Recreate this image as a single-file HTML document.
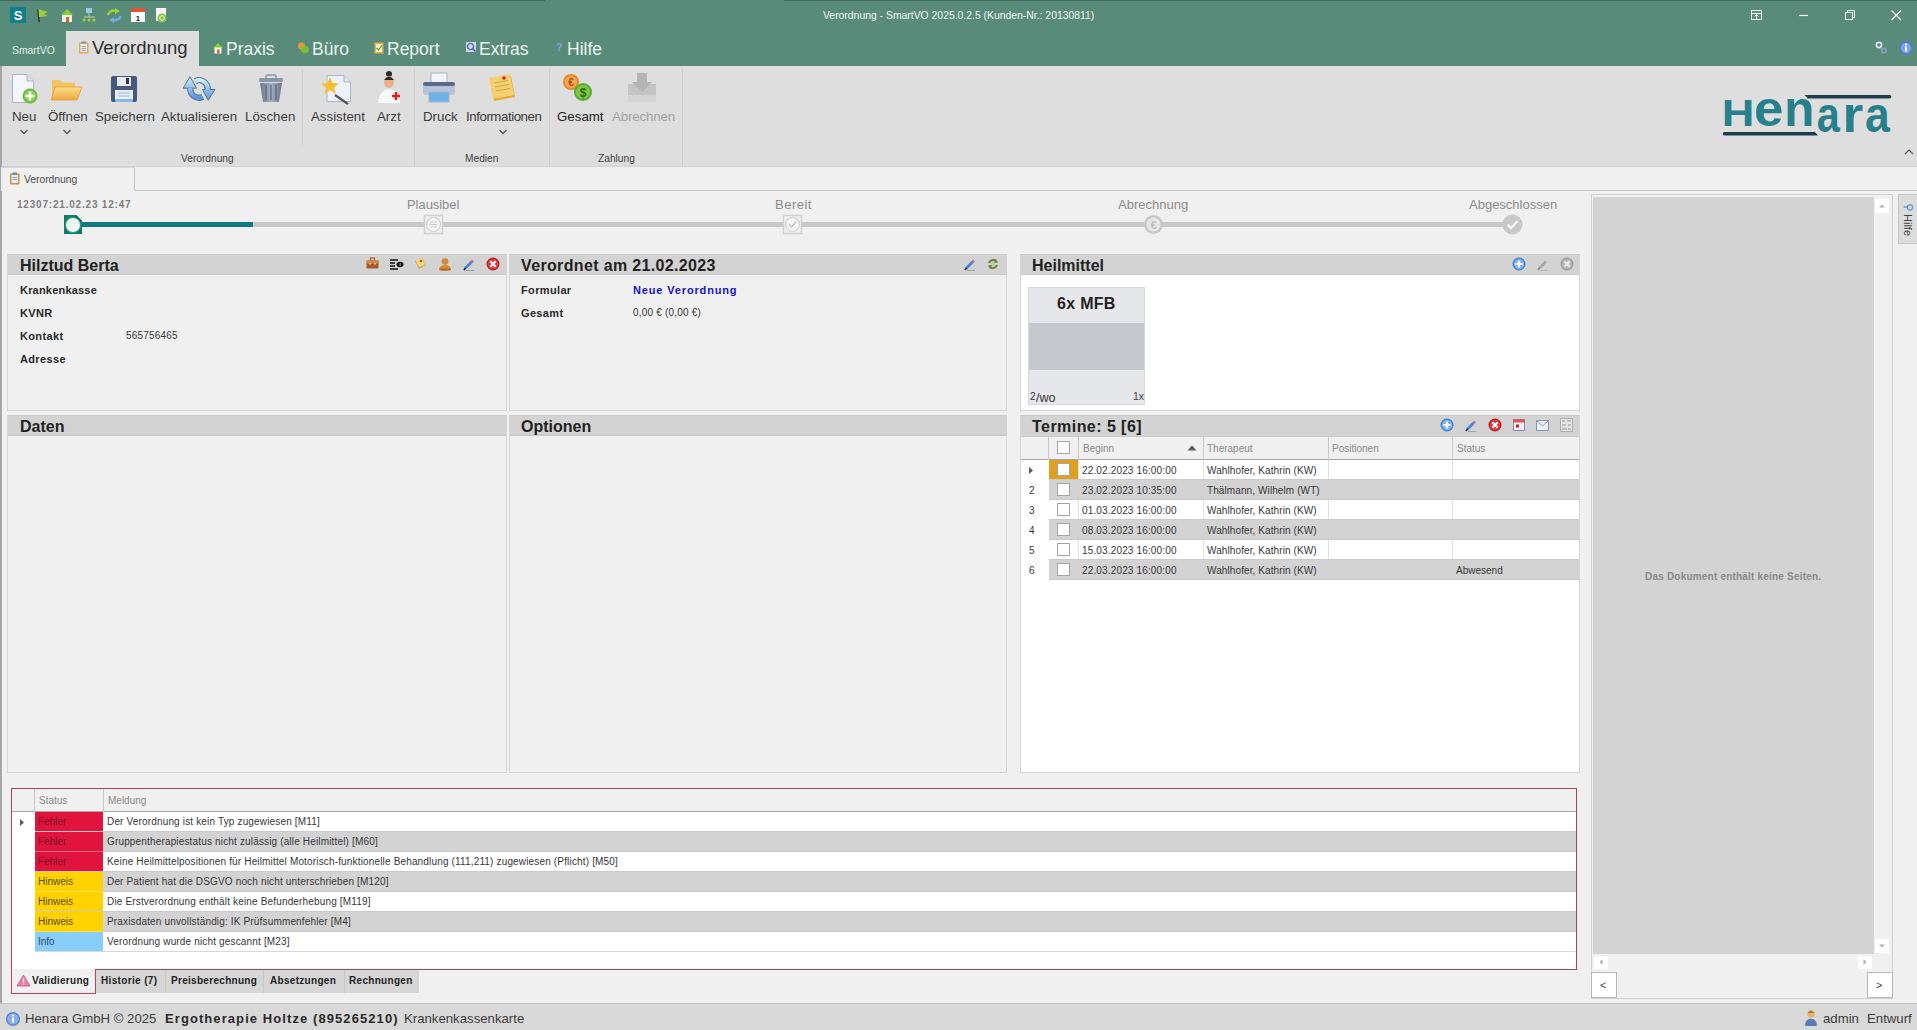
<!DOCTYPE html>
<html><head><meta charset="utf-8">
<style>
*{box-sizing:border-box;margin:0;padding:0}
html,body{width:1917px;height:1030px;overflow:hidden;background:#f0f0f0;font-family:"Liberation Sans",sans-serif;color:#333}
.a{position:absolute}
.t{position:absolute;white-space:nowrap;line-height:1}
#top{left:0;top:0;width:1917px;height:66px;background:#598b7a}
#topline{left:0;top:0;width:1917px;height:1px;background:#3f6d5d}
.mt{color:#e8f5f0;font-size:17.5px;top:41px}
#ribbon{left:0;top:66px;width:1917px;height:101px;background:#dedede;border-bottom:1px solid #d2d2d2}
.rb{font-size:13.3px;color:#3a3a3a}
.gl{font-size:10.2px;color:#444;top:154px}
.sep{width:1px;background:#cfcfcf}
.chev{font-size:9px;color:#555}
.ph{background:#d3d3d3;height:21px;box-shadow:inset 0 1px #cbcbcb,inset 0 -1px #cbcbcb}
.pb{background:#f0f0f0;border:1px solid #d6d6d6}
.ht{font-size:16px;font-weight:700;color:#222}
.lb{font-size:11px;font-weight:700;color:#2a2a2a;letter-spacing:.35px}
.gh{font-size:10px;color:#8a8a8a}
.cell{font-size:10px;color:#363636}
</style></head>
<body>

<svg width="0" height="0" style="position:absolute">
 <defs>
  <symbol id="i-plus" viewBox="0 0 14 14"><circle cx="7" cy="7" r="6.5" fill="#3f7fd0"/><circle cx="7" cy="7" r="5.2" fill="#7db2ee"/><path d="M7 3.5 V10.5 M3.5 7 H10.5" stroke="#fff" stroke-width="2.2"/></symbol>
  <symbol id="i-x" viewBox="0 0 14 14"><circle cx="7" cy="7" r="6.5" fill="#b81c1c"/><circle cx="7" cy="7" r="5.3" fill="#e03a3a"/><path d="M4.3 4.3 L9.7 9.7 M9.7 4.3 L4.3 9.7" stroke="#fff" stroke-width="2"/></symbol>
  <symbol id="i-xg" viewBox="0 0 14 14"><circle cx="7" cy="7" r="6.5" fill="#9a9a9a"/><circle cx="7" cy="7" r="5.3" fill="#b4b4b4"/><path d="M4.3 4.3 L9.7 9.7 M9.7 4.3 L4.3 9.7" stroke="#eee" stroke-width="2"/></symbol>
  <symbol id="i-pen" viewBox="0 0 12 12"><path d="M2 9.5 L9 2.5" stroke="#4a82d8" stroke-width="2.6"/><path d="M8.3 3.2 L10 1.5" stroke="#d86a80" stroke-width="2.6"/><path d="M1 11 L2.5 9" stroke="#222" stroke-width="1.5"/><path d="M3 11.5 H11" stroke="#9aa4b0" stroke-width="1"/></symbol>
  <symbol id="i-peng" viewBox="0 0 12 12"><path d="M2 9.5 L9 2.5" stroke="#a8a8a8" stroke-width="2.6"/><path d="M1 11 L2.5 9" stroke="#888" stroke-width="1.5"/><path d="M3 11.5 H11" stroke="#b8b8b8" stroke-width="1"/></symbol>
 </defs>
</svg>
<!-- title + menu -->
<div class="a" id="top"></div>
<div class="a" id="topline" style="width:545px"></div><div class="a" style="left:784px;top:0;width:1133px;height:1px;background:#3f6d5d"></div>


<!-- quick access icons -->
<svg class="a" style="left:9px;top:7px" width="170" height="18" viewBox="0 0 170 18">
 <rect x="1" y="0" width="16" height="16" fill="#127f8c"/>
 <text x="9" y="13" font-family="Liberation Sans" font-weight="700" font-size="13" fill="#fff" text-anchor="middle">S</text>
 <path d="M29 2 L30 15" stroke="#2b3a2e" stroke-width="1.6"/>
 <path d="M29.5 2 L39 5 L35 7 L39 9 L30 10 Z" fill="#9ccf3a"/>
 <path d="M52 8 L58 2 L64 8 Z" fill="#8acb3a"/><rect x="53" y="8" width="10" height="7" fill="#f4f0e8"/><rect x="57" y="10" width="3" height="5" fill="#d06a2a"/>
 <rect x="77" y="1" width="6" height="5" fill="#9cc7ea"/><path d="M80 6 V10 M75 10 H86" stroke="#c8d08a" stroke-width="1"/><circle cx="75" cy="13" r="1.6" fill="#9ccf3a"/><circle cx="80" cy="13" r="1.6" fill="#9ccf3a"/><circle cx="85" cy="13" r="1.6" fill="#9ccf3a"/>
 <path d="M99 8 Q101 2 108 4" stroke="#9ccf3a" stroke-width="2.4" fill="none"/><path d="M106 1 L111 4 L106 7Z" fill="#9ccf3a"/>
 <path d="M112 9 Q110 14 103 13" stroke="#6eaee0" stroke-width="2.4" fill="none"/><path d="M105 10 L100 13 L105 16Z" fill="#6eaee0"/>
 <rect x="122" y="1" width="14" height="14" fill="#fafafa"/><rect x="122" y="1" width="14" height="4" fill="#e0553a"/><text x="129" y="14" font-family="Liberation Sans" font-weight="700" font-size="8" fill="#223" text-anchor="middle">1</text>
 <rect x="147" y="1" width="10" height="13" fill="#f4f4f4"/><circle cx="153" cy="11" r="4.5" fill="#8cc63c"/><circle cx="153" cy="11" r="2.3" fill="none" stroke="#e8f5d8" stroke-width="1"/>
</svg>
<div class="t" style="left:823px;top:11px;font-size:10.4px;color:#eef6f2">Verordnung - SmartVO 2025.0.2.5 (Kunden-Nr.: 20130811)</div>
<!-- window buttons -->
<svg class="a" style="left:1745px;top:4px" width="170" height="22" viewBox="0 0 170 22">
 <rect x="6.5" y="6.5" width="10" height="9" fill="none" stroke="#f0f0f0" stroke-width="1"/><path d="M6.5 9.5 H16.5 M11.5 15 V11 M9.5 12.5 L11.5 10.5 L13.5 12.5" stroke="#f0f0f0" stroke-width="1" fill="none"/>
 <path d="M54 11.5 H63" stroke="#f0f0f0" stroke-width="1.2"/>
 <rect x="100.5" y="8.5" width="7" height="7" fill="none" stroke="#f0f0f0"/><path d="M102.5 8.5 V6.5 H109.5 V13.5 H107.5" fill="none" stroke="#f0f0f0"/>
 <path d="M146.5 6.5 L156 16 M156 6.5 L146.5 16" stroke="#f0f0f0" stroke-width="1.3"/>
</svg>
<!-- menu tabs -->
<div class="t" style="left:12px;top:46px;font-size:10.4px;color:#e3f1ec">SmartVO</div>
<div class="a" style="left:66px;top:31px;width:133px;height:36px;background:#dedede"></div>
<svg class="a" style="left:78px;top:41px" width="12" height="13" viewBox="0 0 12 13"><rect x="1" y="1.5" width="9.5" height="11" rx="1" fill="#e7a64a"/><rect x="2.5" y="3" width="6.5" height="8" fill="#eef2f8"/><rect x="3.5" y="0.5" width="4.5" height="2" fill="#7d8fa8"/><path d="M3.5 5.5 H8 M3.5 7.5 H8 M3.5 9.5 H8" stroke="#7a8aa8" stroke-width=".8"/></svg>
<div class="t" style="left:92px;top:39px;font-size:18.5px;color:#2d2d2d">Verordnung</div>
<svg class="a" style="left:212px;top:41px" width="12" height="13" viewBox="0 0 12 13"><path d="M1 7 L6 2 L11 7Z" fill="#8acb3a"/><rect x="2.5" y="6.5" width="7" height="6" fill="#f8f4ea"/><rect x="5" y="8.5" width="2.5" height="4" fill="#d06a2a"/></svg>
<div class="t mt" style="left:226px">Praxis</div>
<svg class="a" style="left:297px;top:41px" width="13" height="13" viewBox="0 0 13 13"><circle cx="4.5" cy="5" r="3.5" fill="#e89a3a"/><circle cx="8" cy="8.5" r="3.8" fill="#7cbd3a"/></svg>
<div class="t mt" style="left:312px">Büro</div>
<svg class="a" style="left:373px;top:41px" width="12" height="13" viewBox="0 0 12 13"><rect x="1.5" y="1.5" width="9" height="11" fill="#e8b040"/><rect x="3" y="3" width="6" height="8" fill="#f7f1dc"/><path d="M3.5 7 L5.5 9 L9 4" stroke="#6aa83a" stroke-width="1.3" fill="none"/></svg>
<div class="t mt" style="left:387px">Report</div>
<svg class="a" style="left:465px;top:41px" width="12" height="12" viewBox="0 0 12 12"><rect x="1" y="1" width="10" height="10" fill="#c9d6ec"/><circle cx="5.5" cy="5.5" r="3" fill="none" stroke="#4a5f9a" stroke-width="1.2"/><path d="M7.5 7.5 L10.5 10.5" stroke="#4a5f9a" stroke-width="1.4"/></svg>
<div class="t mt" style="left:479px">Extras</div>
<div class="t" style="left:556px;top:42px;font-size:11px;font-weight:700;color:#7fa6e8">?</div>
<div class="t mt" style="left:567px">Hilfe</div>
<svg class="a" style="left:1874px;top:40px" width="42" height="16" viewBox="0 0 42 16">
 <circle cx="5" cy="5" r="2.6" fill="none" stroke="#dfe6f0" stroke-width="1.6"/><circle cx="10" cy="10.5" r="2.3" fill="none" stroke="#8aa0c8" stroke-width="1.6"/>
 <circle cx="32" cy="8" r="6.5" fill="#4d79d8"/><circle cx="32" cy="8" r="5.2" fill="#7aa2f0"/><rect x="31" y="6.5" width="2" height="5" fill="#fff"/><circle cx="32" cy="4.5" r="1.1" fill="#fff"/>
</svg>


<!-- ribbon -->
<div class="a" id="ribbon"></div>
<div class="a" style="left:0;top:66px;width:2px;height:937px;background:#a6a6a6"></div>
<div class="a sep" style="left:302px;top:69px;height:76px"></div>
<div class="a sep" style="left:414px;top:68px;height:98px"></div>
<div class="a sep" style="left:549px;top:68px;height:98px"></div>
<div class="a sep" style="left:682px;top:68px;height:98px"></div>
<div class="t rb" style="left:12px;top:110px">Neu</div>
<div class="t rb" style="left:48px;top:110px">Öffnen</div>
<div class="t rb" style="left:95px;top:110px">Speichern</div>
<div class="t rb" style="left:161px;top:110px">Aktualisieren</div>
<div class="t rb" style="left:245px;top:110px">Löschen</div>
<div class="t rb" style="left:311px;top:110px">Assistent</div>
<div class="t rb" style="left:377px;top:110px">Arzt</div>
<div class="t rb" style="left:423px;top:110px">Druck</div>
<div class="t rb" style="left:466px;top:110px;letter-spacing:-.45px">Informationen</div>
<div class="t rb" style="left:557px;top:110px;color:#222">Gesamt</div>
<div class="t rb" style="left:612px;top:110px;color:#a2a2a2;letter-spacing:-.15px">Abrechnen</div>
<svg class="a" style="left:18px;top:128px" width="12" height="8"><path d="M2.5 2 L6 5.5 L9.5 2" stroke="#555" stroke-width="1.3" fill="none"/></svg>
<svg class="a" style="left:61px;top:128px" width="12" height="8"><path d="M2.5 2 L6 5.5 L9.5 2" stroke="#555" stroke-width="1.3" fill="none"/></svg>
<svg class="a" style="left:497px;top:128px" width="12" height="8"><path d="M2.5 2 L6 5.5 L9.5 2" stroke="#555" stroke-width="1.3" fill="none"/></svg>
<div class="t gl" style="left:181px">Verordnung</div>
<div class="t gl" style="left:465px">Medien</div>
<div class="t gl" style="left:598px">Zahlung</div>
<!-- ribbon icons -->
<svg class="a" style="left:8px;top:70px" width="680" height="36" viewBox="0 0 680 36">
 <defs>
  <linearGradient id="gfold" x1="0" y1="0" x2="0" y2="1"><stop offset="0" stop-color="#fde08a"/><stop offset="1" stop-color="#f0a840"/></linearGradient>
  <linearGradient id="gblue" x1="0" y1="0" x2="0" y2="1"><stop offset="0" stop-color="#8fc4f0"/><stop offset="1" stop-color="#3b8ad8"/></linearGradient>
  <linearGradient id="gtrash" x1="0" y1="0" x2="1" y2="0"><stop offset="0" stop-color="#6a7690"/><stop offset=".5" stop-color="#a4afc4"/><stop offset="1" stop-color="#6a7690"/></linearGradient>
 </defs>
 <!-- Neu -->
 <path d="M4.5 4.5 H19 L25.5 11 V32.5 H4.5 Z" fill="#f4f6fb" stroke="#a9b3c8"/><path d="M19 4.5 V11 H25.5" fill="#dde3ee" stroke="#a9b3c8"/>
 <circle cx="22" cy="26" r="7.5" fill="#6cb83c"/><circle cx="22" cy="26" r="5.8" fill="#8fd050"/><path d="M22 21.5 V30.5 M17.5 26 H26.5" stroke="#fff" stroke-width="2.4"/>
 <!-- Oeffnen -->
 <path d="M44 10 H52 L54 12.5 H67 V30 H44 Z" fill="#f2c460"/><path d="M47 17 H74 L69 30 H43 Z" fill="url(#gfold)" stroke="#e39a38" stroke-width=".8"/>
 <!-- Speichern -->
 <rect x="103" y="6" width="26" height="26" rx="2" fill="#46597a"/><rect x="109" y="7" width="14" height="9" fill="#e6eaf0"/><rect x="118" y="8" width="3" height="6" fill="#2a3650"/><rect x="107" y="20" width="18" height="12" fill="#e8eef6"/><path d="M110 23 H122 M110 26 H122" stroke="#9fb0c8"/><rect x="107" y="29" width="18" height="3" fill="#8ab8e8"/>
 <!-- Aktualisieren -->
 <linearGradient id="gak" x1="0" y1="0" x2="0" y2="1"><stop offset="0" stop-color="#c8f0fc"/><stop offset="1" stop-color="#5a94e0"/></linearGradient>
 <path d="M187.3 11.1 A8.7 8.7 0 0 1 199.7 19.5 M194.7 26.9 A8.7 8.7 0 0 1 182.3 18.5" stroke="#5a7090" stroke-width="6.2" fill="none"/>
 <path d="M194.5 19.5 H207 L200.2 30.2Z M175.2 18.2 H188.5 L182 6.7Z" fill="url(#gak)" stroke="#5a7090" stroke-width="1"/>
 <path d="M187.3 11.1 A8.7 8.7 0 0 1 199.7 20 M194.7 26.9 A8.7 8.7 0 0 1 182.3 18" stroke="url(#gak)" stroke-width="4.2" fill="none"/>
 <!-- Loeschen -->
 <rect x="251" y="8" width="24" height="4" rx="1.5" fill="#8a94aa"/><rect x="258" y="5" width="10" height="4" rx="1.5" fill="none" stroke="#8a94aa" stroke-width="1.5"/>
 <path d="M252 13 H274 L271 32 H255 Z" fill="url(#gtrash)"/><path d="M258 15 V30 M263 15 V30 M268 15 V30" stroke="#5c6680" stroke-width="1.2"/>
 <!-- Assistent -->
 <path d="M319 5.5 H336 L342.5 12 V31.5 H319 Z" fill="#eef1f8" stroke="#aab4c8"/><path d="M336 5.5 V12 H342.5" fill="#dde3ee" stroke="#aab4c8"/>
 <path d="M327 25 L340 34" stroke="#555" stroke-width="2.2"/>
 <path d="M322 7 L324.5 13 L331 13.5 L326 17.5 L328 24 L322 20 L316.5 24 L318 17.5 L313 13.5 L319.5 13Z" fill="#f3c030"/>
 <!-- Arzt -->
 <circle cx="381" cy="4" r="3" fill="#2a2a2a"/><ellipse cx="381" cy="12" rx="5" ry="6" fill="#e8b088"/><path d="M376 10 Q381 3 386 10" fill="#2a2a2a"/>
 <path d="M370 33 Q371 20 381 19 Q391 20 392 33 Z" fill="#f8f8f8"/><path d="M384 26 H392 M388 22 V30" stroke="#e02020" stroke-width="2.5"/>
 <!-- Druck -->
 <rect x="423" y="3" width="16" height="10" fill="#f2f4f8" stroke="#a8b4c8"/><rect x="415" y="12" width="32" height="13" rx="3" fill="#b8c2d8"/><rect x="415" y="12" width="32" height="4" rx="2" fill="#5a6a8a"/>
 <rect x="421" y="22" width="20" height="10" fill="#6eb0e8" stroke="#a8b4c8"/>
 <!-- Informationen -->
 <path d="M482 10 L503 6 L507 27 L486 31 Z" fill="#e8a838"/><path d="M481 8 L502 4 L506 25 L485 29 Z" fill="#f6d070"/><path d="M486 13 L500 10.5 M487 17 L501 14.5 M488 21 L502 18.5" stroke="#c89a40" stroke-width=".8"/><circle cx="496" cy="8" r="1.8" fill="#d02020"/>
 <!-- Gesamt -->
 <circle cx="563" cy="12" r="8" fill="#e88a30"/><circle cx="563" cy="12" r="6" fill="#f2a850"/><text x="563" y="16" font-family="Liberation Sans" font-weight="700" font-size="10" fill="#b05010" text-anchor="middle">€</text>
 <circle cx="575" cy="22" r="9" fill="#5aaa30"/><circle cx="575" cy="22" r="7" fill="#7cc840"/><text x="575" y="26.5" font-family="Liberation Sans" font-weight="700" font-size="12" fill="#2a6a10" text-anchor="middle">$</text>
 <!-- Abrechnen -->
 <path d="M620 14 H628 L634 22 L640 14 H648 V31 H620 Z" fill="#c4c4c4"/><path d="M629 3 H639 V12 H644 L634 22 L624 12 H629 Z" fill="#b4b4b4"/><rect x="620" y="25" width="28" height="7" fill="#d4d4d4"/>
</svg>
<!-- Henara logo -->
<svg class="a" style="left:1715px;top:90px" width="185" height="50" viewBox="0 0 185 50">
 <g font-family="Liberation Sans" font-weight="700" fill="#27808b">
 <text transform="translate(6.7,36) scale(1.22,1)" font-size="37">H</text>
 <text transform="translate(38.9,36) scale(1.06,1)" font-size="50">e</text>
 <text transform="translate(69.3,36) scale(0.99,1)" font-size="50">n</text>
 <text transform="translate(101.7,42) scale(0.83,1)" font-size="50">a</text>
 <text transform="translate(127.6,42) scale(1.07,1)" font-size="50">r</text>
 <text transform="translate(150.1,42) scale(0.89,1)" font-size="50">a</text>
 </g>
 <path d="M9.5 42 H100 L103 45.5 H9.5 A1.75 1.75 0 0 1 9.5 42Z" fill="#1e3e4b"/>
 <path d="M89.6 4.9 H174.6 A1.75 1.75 0 0 1 174.6 8.4 H93 Z" fill="#1e3e4b"/>
</svg>
<svg class="a" style="left:1903px;top:148px" width="12" height="8"><path d="M2 6 L6 2 L10 6" stroke="#555" stroke-width="1.2" fill="none"/></svg>


<!-- doc tab strip -->
<div class="a" style="left:1px;top:190px;width:1916px;height:1px;background:#c6c6c6"></div>
<div class="a" style="left:1px;top:167px;width:134px;height:24px;background:#f0f0f0;border-right:1px solid #c6c6c6;border-top:1px solid #d6d6d6"></div>
<svg class="a" style="left:9px;top:172px" width="12" height="13" viewBox="0 0 12 13"><rect x="1" y="1.5" width="9.5" height="11" rx="1" fill="#c89440"/><rect x="2.5" y="3" width="6.5" height="8" fill="#e8eef6"/><rect x="3.5" y="0.5" width="4.5" height="2" fill="#5a8ab8"/><path d="M3.5 5.5 H8 M3.5 7.5 H8" stroke="#7a8aa8" stroke-width=".8"/></svg>
<div class="t" style="left:24px;top:175px;font-size:10.3px;color:#4a4a4a">Verordnung</div>
<!-- progress -->
<div class="t" style="left:17px;top:200px;font-size:10px;font-weight:700;color:#7e7e7e;letter-spacing:.8px">12307:21.02.23 12:47</div>
<div class="a" style="left:80px;top:222px;width:1432px;height:5px;background:#c8c8c8"></div>
<div class="a" style="left:80px;top:222px;width:173px;height:5px;background:#107a82"></div>
<svg class="a" style="left:63px;top:214px" width="21" height="21" viewBox="0 0 21 21"><path d="M1 1 H13 L19 7 V20 H1 Z" fill="#137a6e"/><path d="M13 1 L19 7 H13Z" fill="#0e5a66"/><circle cx="10" cy="11" r="8" fill="#3aa070"/><circle cx="10" cy="11" r="7" fill="#eef8f2"/></svg>
<div class="t" style="left:407px;top:199px;font-size:12.9px;color:#8c8c8c">Plausibel</div>
<svg class="a" style="left:423px;top:214px" width="21" height="21" viewBox="0 0 21 21"><rect x="1.5" y="1.5" width="18" height="18" fill="#f0f0f0" stroke="#d0d0d0" stroke-width="1.5"/><circle cx="10.5" cy="10.5" r="7" fill="#f6f6f6" stroke="#cfcfcf" stroke-width="1.2"/><path d="M7 8 H14 M6.5 10.5 H14.5 M7 13 H14" stroke="#cdcdcd" stroke-width="1.2"/></svg>
<div class="t" style="left:775px;top:198px;font-size:13px;color:#8c8c8c;letter-spacing:.5px">Bereit</div>
<svg class="a" style="left:782px;top:214px" width="21" height="21" viewBox="0 0 21 21"><rect x="1.5" y="1.5" width="18" height="18" fill="#f0f0f0" stroke="#d0d0d0" stroke-width="1.5"/><circle cx="10.5" cy="10.5" r="7" fill="#f6f6f6" stroke="#cfcfcf" stroke-width="1.2"/><path d="M7 10.5 L9.5 13 L14 8" stroke="#c4c4c4" stroke-width="1.5" fill="none"/></svg>
<div class="t" style="left:1118px;top:198px;font-size:13px;color:#8c8c8c">Abrechnung</div>
<svg class="a" style="left:1143px;top:214px" width="21" height="21" viewBox="0 0 21 21"><circle cx="10.5" cy="10.5" r="9.5" fill="#c8c8c8"/><circle cx="10.5" cy="10.5" r="7" fill="#e6e6e6"/><text x="10.5" y="14.5" font-family="Liberation Sans" font-weight="700" font-size="11" fill="#c0c0c0" text-anchor="middle">€</text></svg>
<div class="t" style="left:1469px;top:198px;font-size:13px;color:#8c8c8c">Abgeschlossen</div>
<svg class="a" style="left:1502px;top:214px" width="21" height="21" viewBox="0 0 21 21"><circle cx="10.5" cy="10.5" r="10" fill="#c8c8c8"/><path d="M5.5 10.5 L9 14 L15.5 7" stroke="#f4f4f4" stroke-width="2.4" fill="none"/></svg>

<!-- panels row1 -->
<div class="a pb" style="left:7px;top:254px;width:500px;height:157px"></div>
<div class="a ph" style="left:8px;top:254px;width:498px"></div>
<div class="t ht" style="left:20px;top:258px">Hilztud Berta</div>
<div class="t lb" style="left:20px;top:285px;letter-spacing:.2px">Krankenkasse</div>
<div class="t lb" style="left:20px;top:308px">KVNR</div>
<div class="t lb" style="left:20px;top:331px">Kontakt</div>
<div class="t lb" style="left:20px;top:354px">Adresse</div>
<div class="t cell" style="left:126px;top:331px;letter-spacing:.2px">565756465</div>

<div class="a pb" style="left:509px;top:254px;width:498px;height:157px"></div>
<div class="a ph" style="left:510px;top:254px;width:496px"></div>
<div class="t ht" style="left:521px;top:258px;letter-spacing:.35px">Verordnet am 21.02.2023</div>
<div class="t lb" style="left:521px;top:285px">Formular</div>
<div class="t lb" style="left:521px;top:308px">Gesamt</div>
<div class="t lb" style="left:633px;top:285px;color:#1414c8;letter-spacing:.85px">Neue Verordnung</div>
<div class="t cell" style="left:633px;top:308px;letter-spacing:.2px">0,00 € (0,00 €)</div>

<div class="a pb" style="left:1020px;top:254px;width:560px;height:157px;background:#fff"></div>
<div class="a ph" style="left:1021px;top:254px;width:558px"></div>
<div class="t ht" style="left:1032px;top:258px">Heilmittel</div>
<div class="a" style="left:1028px;top:287px;width:117px;height:118px;background:#e6e7eb;border:1px solid #d8d8dc"></div>
<div class="a" style="left:1029px;top:323px;width:115px;height:47px;background:#c5c7cc"></div>
<div class="t ht" style="left:1057px;top:295.5px;letter-spacing:.3px">6x MFB</div>
<div class="t" style="left:1030px;top:392px;font-size:10px;color:#333">2</div>
<div class="t" style="left:1036px;top:392px;font-size:12.5px;color:#333">/wo</div>
<div class="t" style="left:1133px;top:391px;font-size:10.5px;color:#444">1x</div>


<!-- panels row2 -->
<div class="a pb" style="left:7px;top:415px;width:500px;height:358px"></div>
<div class="a ph" style="left:8px;top:415px;width:498px;height:21px;border-bottom:1px solid #c8c8c8"></div>
<div class="t ht" style="left:20px;top:419px">Daten</div>
<div class="a pb" style="left:509px;top:415px;width:498px;height:358px"></div>
<div class="a ph" style="left:510px;top:415px;width:496px;height:21px;border-bottom:1px solid #c8c8c8"></div>
<div class="t ht" style="left:521px;top:419px">Optionen</div>


<!-- Termine panel -->
<div class="a pb" style="left:1020px;top:415px;width:560px;height:358px;background:#fff"></div>
<div class="a ph" style="left:1021px;top:415px;width:558px;height:22px"></div>
<div class="t ht" style="left:1032px;top:419px;letter-spacing:.45px">Termine: 5 [6]</div>
<div class="a" style="left:1021px;top:437px;width:558px;height:23px;background:#f0f0f0;border-bottom:1px solid #a8a8a8"></div>
<div class="a" style="left:1048px;top:437px;width:1px;height:23px;background:#c8c8c8"></div>
<div class="a" style="left:1078px;top:437px;width:1px;height:23px;background:#c8c8c8"></div>
<div class="a" style="left:1203px;top:437px;width:1px;height:23px;background:#c8c8c8"></div>
<div class="a" style="left:1328px;top:437px;width:1px;height:23px;background:#c8c8c8"></div>
<div class="a" style="left:1452px;top:437px;width:1px;height:23px;background:#c8c8c8"></div>
<div class="a" style="left:1057px;top:441px;width:13px;height:13px;background:#fff;border:1px solid #a4a4a4"></div>
<div class="t gh" style="left:1083px;top:444px">Beginn</div>
<svg class="a" style="left:1186px;top:444px" width="12" height="8"><path d="M1.5 6.5 L6 1.5 L10.5 6.5Z" fill="#555"/></svg>
<div class="t gh" style="left:1207px;top:444px">Therapeut</div>
<div class="t gh" style="left:1332px;top:444px">Positionen</div>
<div class="t gh" style="left:1457px;top:444px">Status</div>
<div class="a" style="left:1078px;top:460px;width:1px;height:20px;background:#e0e0e0"></div>
<div class="a" style="left:1203px;top:460px;width:1px;height:20px;background:#e0e0e0"></div>
<div class="a" style="left:1328px;top:460px;width:1px;height:20px;background:#e0e0e0"></div>
<div class="a" style="left:1452px;top:460px;width:1px;height:20px;background:#e0e0e0"></div>
<div class="a" style="left:1049px;top:460px;width:29px;height:20px;background:#dfa020"></div>
<svg class="a" style="left:1027px;top:466px" width="8" height="9"><path d="M2 1 L6 4.5 L2 8Z" fill="#5a5a5a"/></svg>
<div class="a" style="left:1057px;top:463px;width:13px;height:13px;background:#fff;border:1px solid #a4a4a4"></div>
<div class="t cell" style="left:1082px;top:466px;letter-spacing:.15px">22.02.2023 16:00:00</div>
<div class="t cell" style="left:1207px;top:466px;letter-spacing:.1px">Wahlhofer, Kathrin (KW)</div>
<div class="a" style="left:1049px;top:479px;width:530px;height:21px;background:#d3d3d3;box-shadow:inset 0 1px #cacaca,inset 0 -1px #cacaca"></div>
<div class="t cell" style="left:1029px;top:486px">2</div>
<div class="a" style="left:1057px;top:483px;width:13px;height:13px;background:#fff;border:1px solid #a4a4a4"></div>
<div class="t cell" style="left:1082px;top:486px;letter-spacing:.15px">23.02.2023 10:35:00</div>
<div class="t cell" style="left:1207px;top:486px;letter-spacing:.1px">Thälmann, Wilhelm (WT)</div>
<div class="a" style="left:1078px;top:500px;width:1px;height:20px;background:#e0e0e0"></div>
<div class="a" style="left:1203px;top:500px;width:1px;height:20px;background:#e0e0e0"></div>
<div class="a" style="left:1328px;top:500px;width:1px;height:20px;background:#e0e0e0"></div>
<div class="a" style="left:1452px;top:500px;width:1px;height:20px;background:#e0e0e0"></div>
<div class="t cell" style="left:1029px;top:506px">3</div>
<div class="a" style="left:1057px;top:503px;width:13px;height:13px;background:#fff;border:1px solid #a4a4a4"></div>
<div class="t cell" style="left:1082px;top:506px;letter-spacing:.15px">01.03.2023 16:00:00</div>
<div class="t cell" style="left:1207px;top:506px;letter-spacing:.1px">Wahlhofer, Kathrin (KW)</div>
<div class="a" style="left:1049px;top:519px;width:530px;height:21px;background:#d3d3d3;box-shadow:inset 0 1px #cacaca,inset 0 -1px #cacaca"></div>
<div class="t cell" style="left:1029px;top:526px">4</div>
<div class="a" style="left:1057px;top:523px;width:13px;height:13px;background:#fff;border:1px solid #a4a4a4"></div>
<div class="t cell" style="left:1082px;top:526px;letter-spacing:.15px">08.03.2023 16:00:00</div>
<div class="t cell" style="left:1207px;top:526px;letter-spacing:.1px">Wahlhofer, Kathrin (KW)</div>
<div class="a" style="left:1078px;top:540px;width:1px;height:20px;background:#e0e0e0"></div>
<div class="a" style="left:1203px;top:540px;width:1px;height:20px;background:#e0e0e0"></div>
<div class="a" style="left:1328px;top:540px;width:1px;height:20px;background:#e0e0e0"></div>
<div class="a" style="left:1452px;top:540px;width:1px;height:20px;background:#e0e0e0"></div>
<div class="t cell" style="left:1029px;top:546px">5</div>
<div class="a" style="left:1057px;top:543px;width:13px;height:13px;background:#fff;border:1px solid #a4a4a4"></div>
<div class="t cell" style="left:1082px;top:546px;letter-spacing:.15px">15.03.2023 16:00:00</div>
<div class="t cell" style="left:1207px;top:546px;letter-spacing:.1px">Wahlhofer, Kathrin (KW)</div>
<div class="a" style="left:1049px;top:559px;width:530px;height:21px;background:#d3d3d3;box-shadow:inset 0 1px #cacaca,inset 0 -1px #cacaca"></div>
<div class="t cell" style="left:1029px;top:566px">6</div>
<div class="a" style="left:1057px;top:563px;width:13px;height:13px;background:#fff;border:1px solid #a4a4a4"></div>
<div class="t cell" style="left:1082px;top:566px;letter-spacing:.15px">22.03.2023 16:00:00</div>
<div class="t cell" style="left:1207px;top:566px;letter-spacing:.1px">Wahlhofer, Kathrin (KW)</div>
<div class="t cell" style="left:1456px;top:566px">Abwesend</div>

<!-- header icons -->
<svg class="a" style="left:366px;top:257px" width="13" height="12" viewBox="0 0 13 12"><rect x="4.5" y="1" width="4" height="3" fill="none" stroke="#b06a3a" stroke-width="1.3"/><rect x="0.5" y="3.5" width="12" height="8" rx="1" fill="#a85a2a"/><rect x="0.5" y="3.5" width="12" height="3" fill="#d08a50"/><rect x="3" y="6" width="2" height="1.5" fill="#f0c080"/><rect x="8" y="6" width="2" height="1.5" fill="#f0c080"/></svg>
<svg class="a" style="left:390px;top:259px" width="14" height="11" viewBox="0 0 14 11"><path d="M0 1 H8 M0 4 H5 M0 7 H5 M0 10 H8" stroke="#111" stroke-width="1.6"/><ellipse cx="10" cy="5.5" rx="3.5" ry="2.7" fill="#111"/><rect x="9.6" y="4.3" width=".9" height="2.4" fill="#ccc"/></svg>
<svg class="a" style="left:414px;top:257px" width="13" height="13" viewBox="0 0 13 13"><path d="M1 4 L8 1 L12 8 L5 12 Z" fill="#c8a040"/><path d="M1.5 3.5 L8 0.8 L11.5 7.5 L5 10.5 Z" fill="#f6d480"/><circle cx="7" cy="4" r="1.2" fill="#b05020"/></svg>
<svg class="a" style="left:438px;top:257px" width="14" height="14" viewBox="0 0 14 14"><circle cx="7" cy="4.5" r="3.3" fill="#d08a3a"/><path d="M1 13 Q1 8 7 8 Q13 8 13 13 Z" fill="#d88a30"/><ellipse cx="7" cy="12.5" rx="6" ry="1.3" fill="#b86a20"/></svg>
<svg class="a" style="left:463px;top:259px" width="12" height="12"><use href="#i-pen"/></svg>
<svg class="a" style="left:486px;top:257px" width="14" height="14"><use href="#i-x"/></svg>
<svg class="a" style="left:964px;top:259px" width="12" height="12"><use href="#i-pen"/></svg>
<svg class="a" style="left:987px;top:258px" width="12" height="12" viewBox="0 0 12 12"><path d="M2 5 A4.5 4.5 0 0 1 10 4" stroke="#6a8a3a" stroke-width="2.2" fill="none"/><path d="M10 7 A4.5 4.5 0 0 1 2 8" stroke="#6a8a3a" stroke-width="2.2" fill="none"/><path d="M8 1 L11 4.5 L7 5Z" fill="#6a8a3a"/><path d="M4 11 L1 7.5 L5 7Z" fill="#6a8a3a"/><circle cx="6" cy="6" r="2" fill="#b8d090"/></svg>
<svg class="a" style="left:1512px;top:257px" width="14" height="14"><use href="#i-plus"/></svg>
<svg class="a" style="left:1537px;top:259px" width="12" height="12"><use href="#i-peng"/></svg>
<svg class="a" style="left:1560px;top:257px" width="14" height="14"><use href="#i-xg"/></svg>
<svg class="a" style="left:1440px;top:418px" width="14" height="14"><use href="#i-plus"/></svg>
<svg class="a" style="left:1465px;top:420px" width="12" height="12"><use href="#i-pen"/></svg>
<svg class="a" style="left:1488px;top:418px" width="14" height="14"><use href="#i-x"/></svg>
<svg class="a" style="left:1513px;top:419px" width="12" height="12" viewBox="0 0 12 12"><rect x=".5" y=".5" width="11" height="11" fill="#f4eef6" stroke="#8a8aa8"/><rect x=".5" y=".5" width="11" height="3" fill="#e05050"/><rect x="3" y="5.5" width="3" height="3" fill="#c02020"/></svg>
<svg class="a" style="left:1536px;top:420px" width="13" height="11" viewBox="0 0 13 11"><rect x=".5" y=".5" width="12" height="10" fill="#eef0fa" stroke="#8a94c0"/><path d="M.5 .5 L6.5 6 L12.5 .5" stroke="#8a94c0" fill="none"/></svg>
<svg class="a" style="left:1560px;top:418px" width="13" height="14" viewBox="0 0 13 14"><rect x=".5" y=".5" width="12" height="13" fill="#e4e4e4" stroke="#b0b0b0"/><path d="M2 3 H5 M2 7 H6 M2 11 H7 M7 3 H11 M8 7 H11 M8 11 H11" stroke="#9a9a9a"/></svg>


<!-- validation grid -->
<div class="a" style="left:11px;top:788px;width:1566px;height:182px;background:#fff;border:1px solid #a8445a"></div>
<div class="a" style="left:12px;top:789px;width:1564px;height:23px;background:#f0f0f0;border-bottom:1px solid #a8a8a8"></div>
<div class="a" style="left:34px;top:789px;width:1px;height:23px;background:#c8c8c8"></div>
<div class="a" style="left:103px;top:789px;width:1px;height:23px;background:#c8c8c8"></div>
<div class="t gh" style="left:39px;top:796px">Status</div>
<div class="t gh" style="left:108px;top:796px">Meldung</div>
<div class="a" style="left:35px;top:812px;width:68px;height:20px;background:#e0143c;border-bottom:1px solid rgba(255,255,255,.35)"></div>
<div class="t cell" style="left:38px;top:817px;color:#7a1020">Fehler</div>
<div class="t cell" style="left:107px;top:817px;letter-spacing:.16px">Der Verordnung ist kein Typ zugewiesen [M11]</div>
<div class="a" style="left:35px;top:831px;width:1541px;height:21px;background:#d3d3d3;box-shadow:inset 0 1px #cacaca,inset 0 -1px #cacaca"></div>
<div class="a" style="left:35px;top:832px;width:68px;height:20px;background:#e0143c;border-bottom:1px solid rgba(255,255,255,.35)"></div>
<div class="t cell" style="left:38px;top:837px;color:#7a1020">Fehler</div>
<div class="t cell" style="left:107px;top:837px;letter-spacing:.16px">Gruppentherapiestatus nicht zulässig (alle Heilmittel) [M60]</div>
<div class="a" style="left:35px;top:852px;width:68px;height:20px;background:#e0143c;border-bottom:1px solid rgba(255,255,255,.35)"></div>
<div class="t cell" style="left:38px;top:857px;color:#7a1020">Fehler</div>
<div class="t cell" style="left:107px;top:857px;letter-spacing:.16px">Keine Heilmittelpositionen für Heilmittel Motorisch-funktionelle Behandlung (111,211) zugewiesen (Pflicht) [M50]</div>
<div class="a" style="left:35px;top:871px;width:1541px;height:21px;background:#d3d3d3;box-shadow:inset 0 1px #cacaca,inset 0 -1px #cacaca"></div>
<div class="a" style="left:35px;top:872px;width:68px;height:20px;background:#ffd200;border-bottom:1px solid rgba(255,255,255,.35)"></div>
<div class="t cell" style="left:38px;top:877px;color:#5a4a10">Hinweis</div>
<div class="t cell" style="left:107px;top:877px;letter-spacing:.16px">Der Patient hat die DSGVO noch nicht unterschrieben [M120]</div>
<div class="a" style="left:35px;top:892px;width:68px;height:20px;background:#ffd200;border-bottom:1px solid rgba(255,255,255,.35)"></div>
<div class="t cell" style="left:38px;top:897px;color:#5a4a10">Hinweis</div>
<div class="t cell" style="left:107px;top:897px;letter-spacing:.16px">Die Erstverordnung enthält keine Befunderhebung [M119]</div>
<div class="a" style="left:35px;top:911px;width:1541px;height:21px;background:#d3d3d3;box-shadow:inset 0 1px #cacaca,inset 0 -1px #cacaca"></div>
<div class="a" style="left:35px;top:912px;width:68px;height:20px;background:#ffd200;border-bottom:1px solid rgba(255,255,255,.35)"></div>
<div class="t cell" style="left:38px;top:917px;color:#5a4a10">Hinweis</div>
<div class="t cell" style="left:107px;top:917px;letter-spacing:.16px">Praxisdaten unvollständig: IK Prüfsummenfehler [M4]</div>
<div class="a" style="left:35px;top:932px;width:68px;height:20px;background:#87cefa;border-bottom:1px solid rgba(255,255,255,.35)"></div>
<div class="t cell" style="left:38px;top:937px;color:#2a4a6a">Info</div>
<div class="t cell" style="left:107px;top:937px;letter-spacing:.16px">Verordnung wurde nicht gescannt [M23]</div>
<svg class="a" style="left:18px;top:818px" width="8" height="9"><path d="M2 1 L6 4.5 L2 8Z" fill="#5a5a5a"/></svg>
<div class="a" style="left:35px;top:951px;width:1541px;height:1px;background:#d8d8d8"></div>

<!-- bottom tabs -->
<div class="a" style="left:96px;top:970px;width:70px;height:23px;background:#d6d6d6;border-right:1px solid #c8c8c8"></div>
<div class="a" style="left:166px;top:970px;width:98px;height:23px;background:#d6d6d6;border-right:1px solid #c8c8c8"></div>
<div class="a" style="left:264px;top:970px;width:81px;height:23px;background:#d6d6d6;border-right:1px solid #c8c8c8"></div>
<div class="a" style="left:345px;top:970px;width:74px;height:23px;background:#d6d6d6"></div>
<div class="a" style="left:11px;top:969px;width:85px;height:25px;background:#f0f0f0;border:1px solid #c04060;border-top:none"></div>
<svg class="a" style="left:16px;top:974px" width="15" height="13" viewBox="0 0 15 13"><path d="M7.5 1 L14 12 H1 Z" fill="#e880a8" stroke="#c85080" stroke-width=".8"/><rect x="7" y="4.5" width="1.2" height="4" fill="#fff"/><rect x="7" y="9.5" width="1.2" height="1.2" fill="#fff"/></svg>
<div class="t" style="left:32px;top:976px;font-size:10px;font-weight:700;color:#222;letter-spacing:.3px">Validierung</div>
<div class="t" style="left:101px;top:976px;font-size:10px;font-weight:700;color:#222;letter-spacing:.35px">Historie (7)</div>
<div class="t" style="left:171px;top:976px;font-size:10px;font-weight:700;color:#222;letter-spacing:.3px">Preisberechnung</div>
<div class="t" style="left:270px;top:976px;font-size:10px;font-weight:700;color:#222;letter-spacing:.3px">Absetzungen</div>
<div class="t" style="left:349px;top:976px;font-size:10px;font-weight:700;color:#222;letter-spacing:.3px">Rechnungen</div>

<!-- right document panel -->
<div class="a" style="left:1591px;top:194px;width:302px;height:805px;background:#f0f0f0;border:1px solid #d0d0d0"></div>
<div class="a" style="left:1593px;top:197px;width:281px;height:757px;background:#d3d3d3"></div>
<div class="a" style="left:1875px;top:199px;width:14px;height:14px;background:#fff"></div>
<svg class="a" style="left:1877px;top:201px" width="10" height="10"><path d="M2 6.5 L5 3.5 L8 6.5Z" fill="#b0b0b0"/></svg>
<div class="a" style="left:1875px;top:939px;width:14px;height:14px;background:#fff"></div>
<svg class="a" style="left:1877px;top:941px" width="10" height="10"><path d="M2 3.5 L5 6.5 L8 3.5Z" fill="#b0b0b0"/></svg>
<div class="a" style="left:1594px;top:956px;width:14px;height:13px;background:#fff"></div>
<svg class="a" style="left:1596px;top:957px" width="10" height="10"><path d="M6.5 2 L3.5 5 L6.5 8Z" fill="#b0b0b0"/></svg>
<div class="a" style="left:1858px;top:956px;width:14px;height:13px;background:#fff"></div>
<svg class="a" style="left:1860px;top:957px" width="10" height="10"><path d="M3.5 2 L6.5 5 L3.5 8Z" fill="#b0b0b0"/></svg>
<div class="a" style="left:1591px;top:972px;width:26px;height:26px;background:#fff;border:1px solid #b8b8b8"></div>
<div class="t" style="left:1600px;top:980px;font-size:11px;color:#444">&lt;</div>
<div class="a" style="left:1867px;top:972px;width:26px;height:26px;background:#fff;border:1px solid #b8b8b8"></div>
<div class="t" style="left:1876px;top:980px;font-size:11px;color:#444">&gt;</div>
<div class="t" style="left:1645px;top:572px;font-size:10px;font-weight:700;color:#8a8a8a;letter-spacing:.2px">Das Dokument enthält keine Seiten.</div>
<!-- Hilfe side tab -->
<div class="a" style="left:1898px;top:194px;width:20px;height:50px;background:#dcdcdc;border:1px solid #c8c8c8;border-right:none"></div>
<svg class="a" style="left:1903px;top:203px" width="11" height="9" viewBox="0 0 11 9"><circle cx="7" cy="4.5" r="2.6" fill="none" stroke="#5a94e0" stroke-width="1.1"/><path d="M0.5 4 H4.5" stroke="#5a94e0" stroke-width="1.4"/></svg>
<div class="t" style="left:1913px;top:214px;font-size:11px;color:#444;transform-origin:0 0;transform:rotate(90deg)">Hilfe</div>

<!-- status bar -->
<div class="a" style="left:0;top:1003px;width:1917px;height:27px;background:#d9d9d9;border-top:1px solid #c4c4c4"></div>
<svg class="a" style="left:5px;top:1011px" width="16" height="16" viewBox="0 0 16 16"><circle cx="8" cy="8" r="7" fill="#5a84d0"/><circle cx="8" cy="8" r="5.6" fill="#8ab0ec"/><rect x="7" y="6.5" width="2" height="5" fill="#fff"/><circle cx="8" cy="4.6" r="1.1" fill="#fff"/></svg>
<div class="t" style="left:25px;top:1012px;font-size:13.2px;color:#3c3c3c">Henara GmbH © 2025</div>
<div class="t" style="left:165px;top:1012px;font-size:13px;font-weight:700;color:#2a2a2a;letter-spacing:1.08px">Ergotherapie Holtze (895265210)</div>
<div class="t" style="left:404px;top:1012px;font-size:13.2px;color:#3c3c3c">Krankenkassenkarte</div>
<svg class="a" style="left:1803px;top:1009px" width="16" height="18" viewBox="0 0 16 18"><circle cx="8" cy="5" r="3.5" fill="#e8b060"/><path d="M4.5 4 Q8 -1 11.5 4" fill="#b07830"/><path d="M2 17 Q2 10 8 9.5 Q14 10 14 17Z" fill="#5a7ab8"/></svg>
<div class="t" style="left:1823px;top:1012px;font-size:13.2px;color:#3c3c3c">admin</div>
<div class="t" style="left:1867px;top:1012px;font-size:13.2px;color:#3c3c3c">Entwurf</div>

</body></html>
